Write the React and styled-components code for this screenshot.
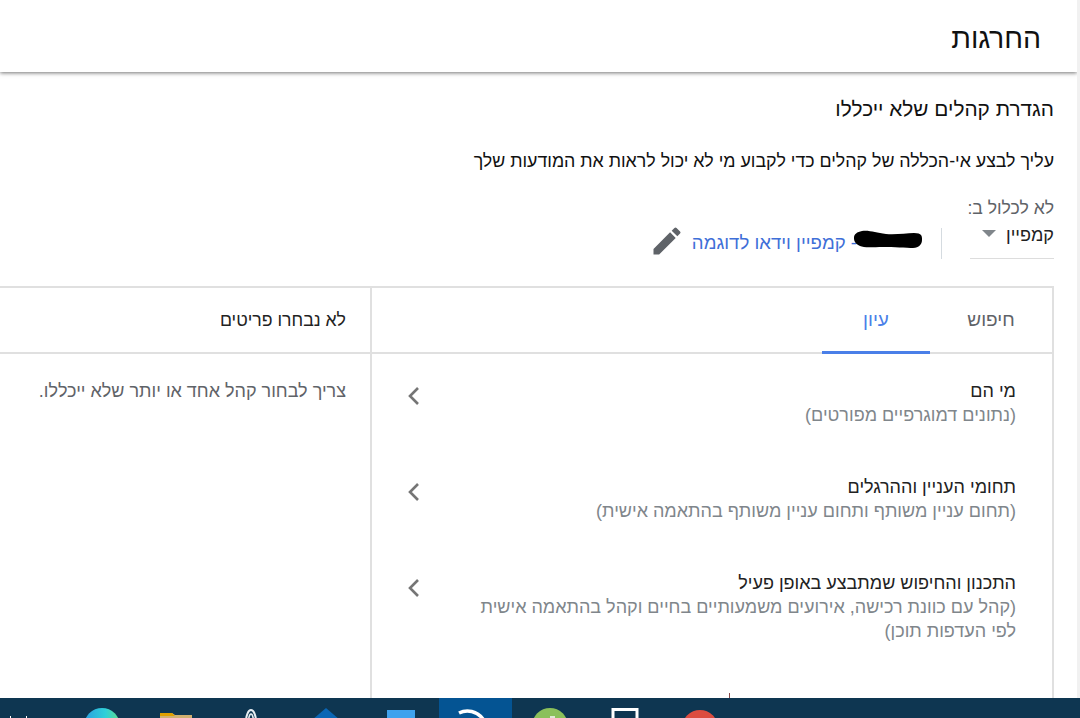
import React from 'react';
import styled, { createGlobalStyle } from 'styled-components';

const Global = createGlobalStyle`
  html, body { margin: 0; padding: 0; background: #fff; height: 100%; overflow: hidden; }
  body { font-family: "Liberation Sans", Arial, sans-serif; }
`;

const Screen = styled.div`
  width: 1080px;
  height: 718px;
  display: flex;
  flex-direction: column;
  overflow: hidden;
`;

const Page = styled.main`
  flex: 1;
  min-height: 0;
  direction: rtl;
  display: flex;
  flex-direction: column;
  overflow: hidden;
  border-right: 3px solid #f1f1f1;
`;

const Header = styled.header`
  height: 72px;
  flex: none;
  display: flex;
  align-items: center;
  padding: 4px 36px 0;
  box-sizing: border-box;
  box-shadow: 0 1px 4px rgba(0, 0, 0, 0.55);
  background: #fff;
  z-index: 1;
`;

const Title = styled.h1`
  margin: 0;
  font-size: 28.5px;
  font-weight: 400;
  color: #111;
`;

const Content = styled.div`
  padding: 25px 23px 0 0;
  display: flex;
  flex-direction: column;
  flex: 1;
  min-height: 0;
`;

const SectionTitle = styled.h2`
  margin: 0;
  font-size: 20.8px;
  line-height: 24px;
  font-weight: 400;
  color: #111;
`;

const Lead = styled.p`
  margin: 28px 0 0;
  font-size: 17.8px;
  line-height: 24px;
  color: #111;
`;

const ScopeLabel = styled.div`
  margin-top: 24px;
  font-size: 17.6px;
  line-height: 22px;
  color: #5f6368;
`;

const ScopeRow = styled.div`
  display: flex;
  align-items: center;
  height: 40px;
`;

const Select = styled.div`
  width: 84px;
  height: 40px;
  box-sizing: border-box;
  border-bottom: 1px solid #ddd;
  display: flex;
  align-items: center;
  gap: 10px;
  font-size: 18px;
  color: #222;
  padding-bottom: 6px;
`;

const Caret = styled.span`
  width: 0;
  height: 0;
  border-left: 7px solid transparent;
  border-right: 7px solid transparent;
  border-top: 7px solid #80868b;
  transform: translateY(-2px);
`;

const Divider = styled.span`
  width: 1px;
  height: 31px;
  align-self: flex-end;
  background: #d5dbe0;
  margin: 0 28px 0 0;
`;

const CampaignLink = styled.span`
  position: relative;
  margin: 8px 20px 0 0;
  font-size: 18.6px;
  color: #3f6fd8;
  white-space: nowrap;
  padding-right: 64px;
`;

const Redaction = styled.svg`
  position: absolute;
  right: -1px;
  top: -2px;
  width: 68px;
  height: 20px;
  fill: #000;
`;

const Pencil = styled.svg`
  width: 36px;
  height: 36px;
  margin: 4px 7px 0 0;
  fill: #5f6368;
`;

const Panel = styled.section`
  margin-top: 27px;
  flex: 1;
  min-height: 0;
  border: solid #e0e0e0;
  border-width: 2px 2px 0 0;
  display: grid;
  grid-template-columns: 682px 1fr;
  grid-template-rows: 66px 1fr;
`;

const Tabs = styled.div`
  display: flex;
  border-bottom: 2px solid #e0e0e0;
  border-left: 2px solid #e0e0e0;
`;

const Tab = styled.div`
  width: ${props => props.active ? '108px' : '122px'};
  display: flex;
  align-items: center;
  justify-content: center;
  font-size: 19px;
  margin-bottom: -2px;
  color: ${props => props.active ? '#4a7fe8' : '#5f6368'};
  border-bottom: 3px solid ${props => props.active ? '#4a7fe8' : 'transparent'};
`;

const SelectedHead = styled.div`
  border-bottom: 2px solid #e0e0e0;
  display: flex;
  align-items: center;
  padding-right: 24px;
  font-size: 17.7px;
  color: #222;
`;

const List = styled.div`
  border-left: 2px solid #e0e0e0;
  padding: 25px 36px 0 32px;
  display: flex;
  flex-direction: column;
  gap: 48px;
`;

const Item = styled.div`
  display: flex;
  justify-content: space-between;
  align-items: flex-start;
`;

const ItemText = styled.div`
  max-width: 540px;
`;

const ItemTitle = styled.div`
  font-size: 18px;
  line-height: 24px;
  color: #222;
`;

const ItemNote = styled.div`
  font-size: 18px;
  line-height: 24px;
  color: #80868b;
`;

const Chevron = styled.svg`
  width: 20px;
  height: 24px;
  margin-top: 5px;
  fill: none;
  stroke: #757575;
  stroke-width: 2.6;
`;

const EmptyNote = styled.div`
  padding: 25px 24px 0 0;
  font-size: 18px;
  line-height: 24px;
  color: #5f6368;
`;

const TaskbarWrap = styled.div`
  position: relative;
  flex: none;
`;

const Taskbar = styled.footer`
  height: 20px;
  background: #0e3651;
  display: flex;
  gap: 1.75px;
  padding-left: 65px;
  overflow: hidden;
  position: relative;
`;

const StartTicks = styled.span`
  position: absolute;
  left: 10px;
  bottom: 0;
  width: 15px;
  height: 2px;
  border: solid #fff;
  border-width: 0 1px;
`;

const Slot = styled.div`
  width: 73px;
  flex: none;
  display: flex;
  justify-content: center;
  background: ${props => props.active ? '#045493' : 'transparent'};
`;

const TrayIcon = styled.svg`
  width: 48px;
  height: 48px;
  margin-top: 10px;
  flex: none;
`;

const RedTick = styled.span`
  position: absolute;
  left: 729px;
  top: -5px;
  width: 1px;
  height: 5px;
  background: #8a4a4a;
`;

const items = [
  { title: 'מי הם', note: '(נתונים דמוגרפיים מפורטים)' },
  { title: 'תחומי העניין וההרגלים', note: '(תחום עניין משותף ותחום עניין משותף בהתאמה אישית)' },
  { title: 'התכנון והחיפוש שמתבצע באופן פעיל', note: '(קהל עם כוונת רכישה, אירועים משמעותיים בחיים וקהל בהתאמה אישית לפי העדפות תוכן)' },
];

const App = () => (
  <Screen>
    <Global />
    <Page>
      <Header><Title>החרגות</Title></Header>
      <Content>
        <SectionTitle>הגדרת קהלים שלא ייכללו</SectionTitle>
        <Lead>עליך לבצע אי-הכללה של קהלים כדי לקבוע מי לא יכול לראות את המודעות שלך</Lead>
        <ScopeLabel>לא לכלול ב:</ScopeLabel>
        <ScopeRow>
          <Select>קמפיין<Caret /></Select>
          <Divider />
          <CampaignLink>
            - קמפיין וידאו לדוגמה
            <Redaction viewBox="0 0 68 20"><path d="M8 1c8-1 14 2 24 3s20-1 28-1 8 3 8 7-3 8-9 8-20-1-30-1-19 1-23-1S0 12 0 8s3-6 8-7z" /></Redaction>
          </CampaignLink>
          <Pencil viewBox="0 0 24 24"><path d="M3 17.25V21h3.75L17.81 9.94l-3.75-3.75L3 17.25zM20.71 7.04a1 1 0 0 0 0-1.41l-2.34-2.34a1 1 0 0 0-1.41 0l-1.83 1.83 3.75 3.75 1.83-1.83z" /></Pencil>
        </ScopeRow>
        <Panel>
          <Tabs>
            <Tab>חיפוש</Tab>
            <Tab active>עיון</Tab>
          </Tabs>
          <SelectedHead>לא נבחרו פריטים</SelectedHead>
          <List>
            {items.map(item => (
              <Item key={item.title}>
                <ItemText>
                  <ItemTitle>{item.title}</ItemTitle>
                  <ItemNote>{item.note}</ItemNote>
                </ItemText>
                <Chevron viewBox="0 0 20 24"><path d="M14 4l-8 8 8 8" /></Chevron>
              </Item>
            ))}
          </List>
          <EmptyNote>צריך לבחור קהל אחד או יותר שלא ייכללו.</EmptyNote>
        </Panel>
      </Content>
    </Page>
    <TaskbarWrap>
      <RedTick />
      <Taskbar>
        <StartTicks />
        <Slot>
          <TrayIcon viewBox="0 0 48 48">
            <defs>
              <linearGradient id="edgeGrad" x1="0" y1="0" x2="1" y2="0">
                <stop offset="0" stopColor="#2a9fe0" />
                <stop offset="0.6" stopColor="#2fd0d8" />
                <stop offset="1" stopColor="#5fdc8c" />
              </linearGradient>
            </defs>
            <circle cx="24" cy="18" r="18" fill="url(#edgeGrad)" />
          </TrayIcon>
        </Slot>
        <Slot>
          <TrayIcon viewBox="0 0 48 48">
            <path d="M8 5h12l3 2h17v20H8z" fill="#d0b070" />
            <path d="M8 5h12l3 3H8z" fill="#dfa000" />
          </TrayIcon>
        </Slot>
        <Slot>
          <TrayIcon viewBox="0 0 48 48">
            <ellipse cx="24" cy="14" rx="5" ry="12" fill="none" stroke="#e8eef2" strokeWidth="2" />
            <ellipse cx="24" cy="15" rx="2.5" ry="9" fill="none" stroke="#e8eef2" strokeWidth="1.5" />
          </TrayIcon>
        </Slot>
        <Slot>
          <TrayIcon viewBox="0 0 48 48"><path d="M24 0l14 12v20H10V12z" fill="#0a66b5" /></TrayIcon>
        </Slot>
        <Slot>
          <TrayIcon viewBox="0 0 48 48"><rect x="10" y="2" width="28" height="30" fill="#3fa2ee" /></TrayIcon>
        </Slot>
        <Slot active>
          <TrayIcon viewBox="0 0 48 48"><path d="M8 5c8-4 18-2 24 6" fill="none" stroke="#fff" strokeWidth="3.5" /></TrayIcon>
        </Slot>
        <Slot>
          <TrayIcon viewBox="0 0 48 48">
            <circle cx="24" cy="18" r="18" fill="#8bc05a" />
            <path d="M24 8h5v6h-5z" fill="#dfe8d4" />
          </TrayIcon>
        </Slot>
        <Slot>
          <TrayIcon viewBox="0 0 48 48"><rect x="12" y="1.5" width="24" height="30" fill="none" stroke="#fff" strokeWidth="3" /></TrayIcon>
        </Slot>
        <Slot>
          <TrayIcon viewBox="0 0 48 48"><circle cx="24" cy="20" r="18" fill="#dc4c3f" /></TrayIcon>
        </Slot>
      </Taskbar>
    </TaskbarWrap>
  </Screen>
);

export default App;
